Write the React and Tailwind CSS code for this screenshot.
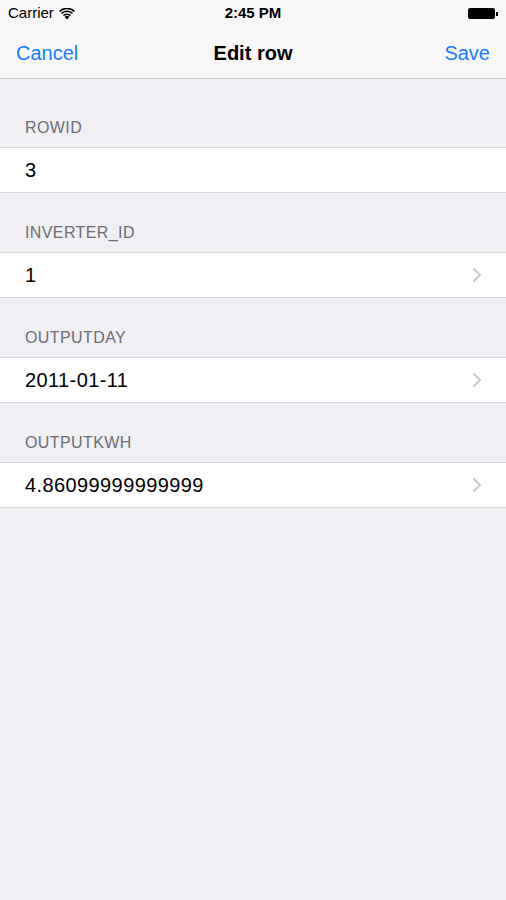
const sections = [
  { label: 'ROWID', value: '3', chevron: false },
  { label: 'INVERTER_ID', value: '1', chevron: true },
  { label: 'OUTPUTDAY', value: '2011-01-11', chevron: true },
  { label: 'OUTPUTKWH', value: '4.86099999999999', chevron: true },
];

function Chevron() {
  return (
    <svg width="10" height="16" viewBox="0 0 10 16" fill="none">
      <path d="M1.5 1.5L8 8L1.5 14.5" stroke="#c7c7cc" strokeWidth="2" />
    </svg>
  );
}

export default function App() {
  return (
    <div className="w-[506px] h-[900px] bg-[#efeff4] font-['Liberation_Sans',sans-serif]">
      {/* status + nav */}
      <div className="bg-[#f7f7f7] border-b border-[#c8c7cc]">
        <div className="h-[27px] flex items-center justify-between px-[8px] text-[15px] text-black">
          <div className="flex items-center gap-[5px] w-[120px]">
            <span>Carrier</span>
            <svg width="16" height="12" viewBox="0 0 16 12">
              <path d="M8 11.5L5.6 8.9a3.4 3.4 0 0 1 4.8 0z" fill="#000" />
              <path d="M3.9 7.1a5.8 5.8 0 0 1 8.2 0l-1.1 1.2a4.2 4.2 0 0 0-6 0z" fill="#000" />
              <path d="M1.9 5a8.7 8.7 0 0 1 12.2 0L13 6.1a7.1 7.1 0 0 0-10 0z" fill="#000" />
              <path d="M0 2.9a11.4 11.4 0 0 1 16 0L14.9 4a9.8 9.8 0 0 0-13.8 0z" fill="#000" />
            </svg>
          </div>
          <span className="font-bold">2:45 PM</span>
          <div className="w-[120px] flex justify-end items-center">
            <div className="w-[27px] h-[11px] bg-black rounded-[2px]" />
            <div className="w-[2px] h-[4px] bg-black ml-[1px]" />
          </div>
        </div>
        <div className="h-[51px] flex items-center justify-between px-[16px] text-[20px]">
          <span className="text-[#157efb] w-[80px]">Cancel</span>
          <span className="font-bold text-black">Edit row</span>
          <span className="text-[#157efb] w-[80px] text-right">Save</span>
        </div>
      </div>

      <div className="pt-[35px]">
        {sections.map((s, i) => (
          <div key={s.label} className={i === 0 ? '' : 'pt-[26px]'}>
            <div className="px-[25px] text-[16px] tracking-[0.4px] text-[#6d6d72] h-[35px] leading-[35px] -mt-[4px] mb-[2px]">
              {s.label}
            </div>
            <div className="bg-white border-y border-[#c8c7cc]/70 h-[46px] flex items-center justify-between pl-[25px] pr-[24px] text-[20px] tracking-[0.4px] text-black">
              <span>{s.value}</span>
              {s.chevron && <Chevron />}
            </div>
          </div>
        ))}
      </div>
    </div>
  );
}
